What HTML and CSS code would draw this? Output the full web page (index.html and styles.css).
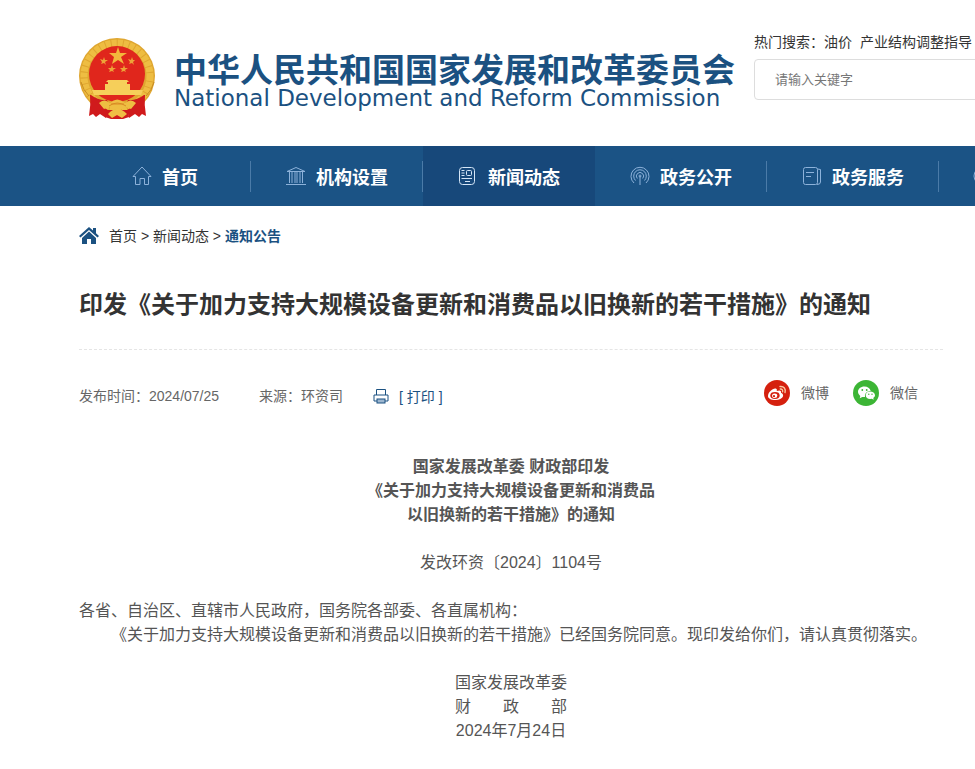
FILE: index.html
```html
<!DOCTYPE html>
<html lang="zh-CN">
<head>
  <meta charset="utf-8">
  <title>通知公告</title>
  <link rel="stylesheet" href="styles.css">
</head>
<body>
  <header class="header">
    <a href="#" class="logo">
      <svg class="emblem" viewBox="0 0 77 82">
        <circle cx="38" cy="38" r="38" fill="#dfa630"/>
        <circle cx="38" cy="38" r="33" fill="none" stroke="#eebd42" stroke-width="7" stroke-dasharray="5 1"/>
        <circle cx="38" cy="36" r="28" fill="#e0261c"/>
        <path d="M39 9 L41 15 L48 15 L42 19 L45 26 L39 22 L33 26 L35 19 L30 15 L37 15 Z" fill="#f3b73c"/>
        <path d="M25 19 L26 22 L29 22 L26 24 L27 27 L25 25 L22 26 L23 24 L21 21 L24 22 Z" fill="#eda438"/>
        <path d="M53 19 L54 22 L56 22 L54 24 L55 27 L53 25 L50 26 L51 24 L49 21 L52 22 Z M33 27 L34 30 L37 30 L34 32 L35 34 L33 33 L30 34 L31 32 L29 30 L32 30 Z M45 27 L46 30 L49 30 L46 32 L47 34 L45 33 L42 34 L43 32 L41 30 L44 30 Z" fill="#eda438"/>
        <path d="M29 42 H48 L50 44 H48 V46 H51 V50 H26 V46 H29 V44 H27 Z M26 50 H51 V52 H64 L62 57 H15 L13 52 H26 Z" fill="#f6cf5a"/>
        <path d="M12 57 Q20 63 28 62 L30 66 L24 69 L29 72 L27 80 L21 76 L17 79 L14 76 L10 78 Q12 67 11 57 Z" fill="#d01a1c"/>
        <path d="M65 57 Q57 63 49 62 L47 66 L53 69 L48 72 L50 80 L56 76 L60 79 L63 76 L67 78 Q65 67 66 57 Z" fill="#d01a1c"/>
        <path d="M28 72 H49 L50 79 L44 81 H32 L26 79 Z" fill="#d01a1c"/>
        <path d="M20 65 Q25 60 31 65 Q38 58 46 65 Q52 60 57 65 L52 71 L47 69 Q38 74 30 69 L25 71 Z" fill="#eebd42"/>
        <path d="M29 76 Q38 66 48 76 L43 80 L38 77 L33 80 Z" fill="#f0be45"/>
        <path d="M30 68 Q38 62 47 68 M32 66 L45 66" fill="none" stroke="#d98a24"/>
        <path d="M10 58 Q4 52 2 44 M67 58 Q73 52 75 44" fill="none" stroke="#c98d24"/>
      </svg>
      <span class="logo-text">
        <strong class="logo-cn">中华人民共和国国家发展和改革委员会</strong>
        <span class="logo-en">National Development and Reform Commission</span>
      </span>
    </a>
    <form class="search">
      <label class="hot" for="keyword">热门搜索：<a href="#">油价</a><a href="#" class="hot-next">产业结构调整指导</a></label>
      <input type="text" id="keyword" class="search-input" placeholder="请输入关键字">
    </form>
  </header>

  <nav class="nav">
    <ul class="nav-list">
      <li class="nav-item">
        <a href="#">
          <svg class="nav-icon" viewBox="0 0 20 20"><path d="M3.500 10.500 H1 L10 1 L19 10.500 H16.500 V18.500 H12.500 V12.500 H8 V18.500 H3.500 Z"/></svg>首页
        </a>
      </li>
      <li class="nav-item">
        <a href="#">
          <svg class="nav-icon" viewBox="0 0 20 20"><path d="M1 5.500 L10 1.500 L19 5.500 Z M3.500 6 V17 M6 6 V17 M9 6 V17 M11 6 V17 M14 6 V17 M16.500 6 V17 M0 18.500 H20"/></svg>机构设置
        </a>
      </li>
      <li class="nav-item active">
        <a href="#">
          <svg class="nav-icon" viewBox="0 0 20 20"><rect x="1.500" y="1.500" width="15" height="17" rx="3"/><path d="M3.500 4.500 H6.500 M3.500 7 H6.500 M3.500 9.500 H6.500 M3.500 12.500 H14 M7 15.500 H12"/><rect x="8.500" y="4.500" width="5" height="5" rx="1"/></svg>新闻动态
        </a>
      </li>
      <li class="nav-item">
        <a href="#">
          <svg class="nav-icon" viewBox="0 0 20 20"><path d="M10 10 V19 M4 17 A9 9 0 1 1 16 17 M5.500 14.500 A6.300 6.300 0 1 1 14.500 14.500 M7.300 12.500 A3.600 3.600 0 1 1 12.700 12.500"/><circle cx="10" cy="10" r="1"/></svg>政务公开
        </a>
      </li>
      <li class="nav-item">
        <a href="#">
          <svg class="nav-icon" viewBox="0 0 20 20"><rect x="1.500" y="1.500" width="14" height="17" rx="2"/><path d="M15.500 3 L18.500 3.500 V16 Q18.500 18.500 15 18.500 M4 6.500 H12 M4 10.500 H9"/></svg>政务服务
        </a>
      </li>
      <li class="nav-item nav-more">
        <a href="#">
          <svg class="nav-icon" viewBox="0 0 20 20"><circle cx="10" cy="10" r="9"/></svg>
        </a>
      </li>
    </ul>
  </nav>

  <main class="main">
    <div class="crumb">
      <svg class="crumb-icon" viewBox="0 0 20 18"><path d="M0 9 L10 0 L14 3.500 V1 H17 V6.300 L20 9 L18.500 10.500 L10 3 L1.500 10.500 Z M3 11 L10 4.500 L17 11 V17 H12 V12 H8 V17 H3 Z" fill="#1b5181"/></svg>
      <span><a href="#">首页</a> &gt; <a href="#">新闻动态</a> &gt; <a href="#" class="current">通知公告</a></span>
    </div>

    <h1 class="title">印发《关于加力支持大规模设备更新和消费品以旧换新的若干措施》的通知</h1>

    <div class="meta">
      <span class="date">发布时间：2024/07/25</span>
      <span class="source">来源：环资司</span>
      <button type="button" class="print">
        <svg class="print-icon" viewBox="0 0 16 16"><path d="M3.500 7 V1.500 H12.500 V7 M4 13 H1 V7 H15 V13 H12"/><rect x="4" y="11" width="8" height="4" fill="#9db7d0"/></svg>[ 打印 ]
      </button>
      <div class="share">
        <a href="#">
          <svg class="share-icon" viewBox="0 0 26 26">
            <circle cx="13" cy="13" r="13" fill="#d5200e"/>
            <path d="M4 16 C4 12 10 7 12.500 9 C13.300 9.700 12.700 11 12.700 11 C15.500 10 17.500 10.200 17 12.700 C21 14 19.500 20 11.500 20 C7 20 4 18.500 4 16 Z" fill="#fff"/>
            <ellipse cx="11" cy="15.500" rx="4.700" ry="3.400" fill="#d5200e"/>
            <ellipse cx="10.700" cy="15.700" rx="2.600" ry="2.300" fill="#fff"/>
            <circle cx="10" cy="16.200" r="1.100" fill="#d5200e"/>
            <path d="M16 6.500 C20 6 22 9 21 12.500 M16.300 9 C18 8.800 19 10 18.600 11.700" fill="none" stroke="#f9c8a0" stroke-width="1.400" stroke-linecap="round"/>
          </svg>微博
        </a>
        <a href="#">
          <svg class="share-icon" viewBox="0 0 26 26">
            <circle cx="13" cy="13" r="13" fill="#3cb535"/>
            <path d="M11.500 6.500 C7.500 6.500 5 9 5 11.800 C5 13.500 6 15 7.300 16 L6.700 18.200 L9.300 16.900 L12 17 C11.500 13 14.500 11 17.700 11 C17 8 14.500 6.500 11.500 6.500 Z" fill="#fff"/>
            <path d="M17 11.600 C14.500 11.600 12.700 13.200 12.700 15.300 C12.700 17.500 14.600 19 17 19 L18.800 18.700 L20.700 19.700 L20.300 18 C21.400 17.200 22 16.300 22 15.300 C22 13.200 19.800 11.600 17 11.600 Z" fill="#fff"/>
            <g fill="#3cb535"><circle cx="9.300" cy="10" r="0.900"/><circle cx="13.700" cy="10" r="0.900"/><circle cx="15.800" cy="14.200" r="0.700"/><circle cx="19" cy="14.200" r="0.700"/></g>
          </svg>微信
        </a>
      </div>
    </div>

    <article class="article">
      <p class="center"><strong>国家发展改革委 财政部印发<br>《关于加力支持大规模设备更新和消费品<br>以旧换新的若干措施》的通知</strong></p>
      <p class="center">发改环资〔2024〕1104号</p>
      <div class="text">
        <p>各省、自治区、直辖市人民政府，国务院各部委、各直属机构：</p>
        <p class="indent">《关于加力支持大规模设备更新和消费品以旧换新的若干措施》已经国务院同意。现印发给你们，请认真贯彻落实。</p>
      </div>
      <p class="center">国家发展改革委<br>财　　政　　部<br>2024年7月24日</p>
    </article>
  </main>
</body>
</html>
```

FILE: styles.css
```css
* {
  margin: 0;
  padding: 0;
  box-sizing: border-box;
}

body {
  background: #fff;
  color: #333;
  font-family: "Liberation Sans", "Noto Sans CJK SC", sans-serif;
  font-size: 14px;
  overflow-x: hidden;
}

a {
  color: inherit;
  text-decoration: none;
}

/* header */
.header {
  display: flex;
  align-items: flex-start;
  padding: 32px 0 26px 79px;
  overflow: hidden;
}

.logo {
  display: flex;
  flex: none;
  gap: 18px;
  padding-top: 6px;
  color: #1b5181;
}

.emblem {
  width: 77px;
  height: 82px;
}

.logo-text {
  display: flex;
  flex-direction: column;
  padding-top: 16px;
  white-space: nowrap;
}

.logo-cn {
  font-size: 33px;
  line-height: 33px;
}

.logo-en {
  font-family: "DejaVu Sans", sans-serif;
  font-size: 23px;
  line-height: 23px;
}

.search {
  flex: 1 0 260px;
  margin-left: 19px;
}

.hot {
  display: block;
  line-height: 20px;
  white-space: nowrap;
}

.hot-next {
  margin-left: 8px;
}

.search-input {
  display: block;
  width: 100%;
  height: 41px;
  margin-top: 7px;
  padding: 0 20px;
  border: 1px solid #ddd;
  border-radius: 4px;
  font-family: inherit;
  font-size: 13px;
}

.search-input::placeholder {
  color: #777;
}

/* navigation */
.nav {
  padding-left: 79px;
  background: #1b5385;
  overflow: hidden;
}

.nav-list {
  display: flex;
  list-style: none;
}

.nav-item {
  display: flex;
  flex: 0 0 172px;
  align-items: center;
  justify-content: center;
  height: 60px;
  background: linear-gradient(#4b7ba8, #4b7ba8) right center / 1px 31px no-repeat;
  color: #fff;
  font-size: 18px;
  font-weight: bold;
}

.nav-item a {
  display: flex;
  align-items: center;
  gap: 10px;
}

.nav-item.active {
  background: #17487a;
}

.nav-more {
  justify-content: flex-start;
  padding-left: 34px;
}

.nav-icon {
  width: 20px;
  height: 20px;
  fill: none;
  stroke: #8db2da;
  stroke-width: 1;
}

.active .nav-icon {
  stroke: #d5e6f7;
}

/* content */
.main {
  padding: 20px 32px 20px 79px;
}

.crumb {
  display: flex;
  align-items: center;
  gap: 10px;
  line-height: 20px;
}

.crumb-icon {
  width: 20px;
  height: 18px;
}

.current {
  color: #1b5181;
  font-weight: bold;
}

.title {
  padding: 41px 0 26px;
  border-bottom: 1px dashed #e5e5e5;
  font-size: 24px;
  line-height: 36px;
}

.meta {
  display: flex;
  align-items: center;
  margin-top: 30px;
  color: #666;
  line-height: 26px;
}

.source {
  margin-left: 40px;
}

.print {
  display: flex;
  align-items: center;
  gap: 10px;
  margin-left: 30px;
  border: none;
  background: none;
  color: #1b5181;
  font-family: inherit;
  font-size: 14px;
}

.print-icon {
  width: 16px;
  height: 16px;
  fill: none;
  stroke: #1b5181;
  stroke-width: 1;
}

.share {
  display: flex;
  gap: 24px;
  margin-left: auto;
  padding: 0 25px 6px 0;
}

.share a {
  display: flex;
  align-items: center;
  gap: 11px;
}

.share-icon {
  width: 26px;
  height: 26px;
}

.article {
  display: flex;
  flex-direction: column;
  gap: 24px;
  margin-top: 43px;
  color: #555;
  font-size: 16px;
  line-height: 24px;
}

.center {
  text-align: center;
}

.indent {
  text-indent: 2em;
}
```
